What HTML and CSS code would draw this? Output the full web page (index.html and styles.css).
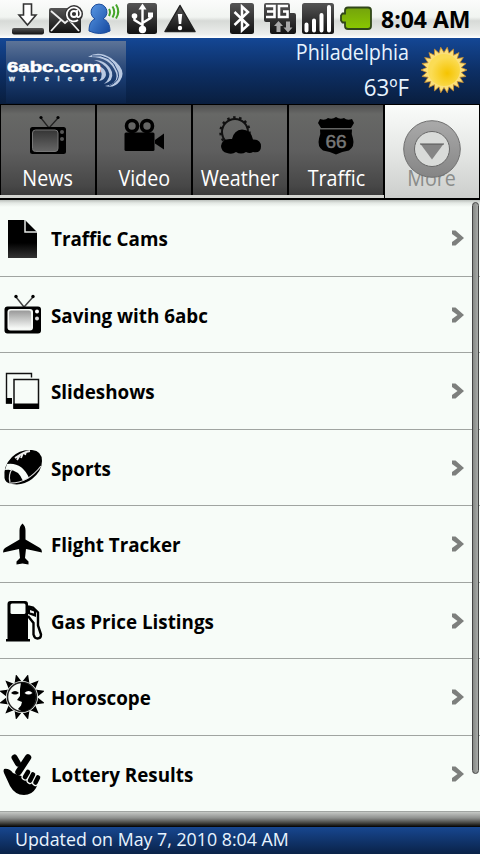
FILE: index.html
```html
<!DOCTYPE html>
<html lang="en">
<head>
  <meta charset="UTF-8">
  <title>6abc.com wireless</title>
  <link rel="stylesheet" href="styles.css">
</head>
<body>

<!-- shared shapes -->
<svg class="defs" width="0" height="0">
  <defs>
    <linearGradient id="dark" x1="0" y1="0" x2="0" y2="1">
      <stop offset="0" stop-color="#555"/><stop offset="1" stop-color="#111"/>
    </linearGradient>
    <linearGradient id="screen" x1="0" y1="0" x2="0" y2="1">
      <stop offset="0" stop-color="#999"/><stop offset="1" stop-color="#f8faf8"/>
    </linearGradient>
    <linearGradient id="screenDark" x1="0" y1="0" x2="0" y2="1">
      <stop offset="0" stop-color="#353535"/><stop offset="1" stop-color="#666"/>
    </linearGradient>
    <linearGradient id="paper" x1="0" y1="0" x2="0" y2="1">
      <stop offset="0.6" stop-color="#000"/><stop offset="1" stop-color="#333"/>
    </linearGradient>
    <linearGradient id="blue" x1="0" y1="0" x2="1" y2="1">
      <stop offset="0" stop-color="#5b9be8"/><stop offset="1" stop-color="#14489e"/>
    </linearGradient>
    <linearGradient id="green" x1="0" y1="0" x2="0" y2="1">
      <stop offset="0" stop-color="#74a30c"/><stop offset="1" stop-color="#8ac800"/>
    </linearGradient>
    <linearGradient id="ring" x1="0" y1="0" x2="0" y2="1">
      <stop offset="0" stop-color="#aaa"/><stop offset="1" stop-color="#858585"/>
    </linearGradient>
    <radialGradient id="sun" cx=".6" cy=".6">
      <stop offset="0" stop-color="#f5c400"/><stop offset="1" stop-color="#fbdc55"/>
    </radialGradient>
    <symbol id="arrow" viewBox="0 0 14 18">
      <path d="M1 1.500H4.500L13 9L4.500 16.500H1V13L6.500 9L1 5Z" fill="#7d7f7d"/>
    </symbol>
  </defs>
</svg>

<div class="status">
  <svg width="374" height="38" viewBox="0 0 374 38">
    <!-- download -->
    <rect x="12" y="28" width="32" height="6.500" rx="2" fill="url(#dark)"/>
    <path d="M23.500 4h8v11h4.500L27.500 25 19 15h4.500z" fill="#fff" stroke="#333" stroke-width="1.600"/>
    <!-- mail -->
    <rect x="49" y="8" width="32" height="25" rx="2" fill="url(#dark)"/>
    <path d="M51 11l14 12L79 11M51 31l10-11M79 31L69 20" fill="none" stroke="#eee" stroke-width="1.800"/>
    <circle cx="74" cy="14" r="9" fill="#333"/>
    <circle cx="74" cy="14" r="3" fill="none" stroke="#fff" stroke-width="1.800"/>
    <path d="M77 10v5q0 2.500 2 2 2-1 1.500-4.500A7 7 0 1 0 78 20" fill="none" stroke="#fff" stroke-width="1.800"/>
    <!-- voice contact -->
    <path d="M89 31c0-8 3-11 6-12a8 8 0 1 1 8 0c4 1 7 5 7 12q-10 5-21 0z" fill="url(#blue)" stroke="#1b4c9c"/>
    <path d="M109 9q2 3 0 7M112.500 6.500q3.500 5.500 0 11M116 4.500q4.500 7 0 14" fill="none" stroke="#45a52a" stroke-width="2"/>
    <!-- usb -->
    <rect x="127" y="3" width="30" height="31" rx="2.500" fill="url(#dark)"/>
    <path d="M142.500 8v22M142.500 25l-8-5v-4M142.500 23l8-5v-3" fill="none" stroke="#fff" stroke-width="2.400"/>
    <path d="M142.500 3.500l4 6h-8z" fill="#fff"/>
    <circle cx="142.500" cy="29.500" r="3.700" fill="#fff"/>
    <circle cx="134.500" cy="16" r="2.800" fill="#fff"/>
    <rect x="148" y="12.500" width="5" height="5" fill="#fff"/>
    <!-- warning -->
    <path d="M180 5.500L195 31.500H165z" fill="url(#dark)" stroke="#222" stroke-width="1.500" stroke-linejoin="round"/>
    <path d="M177.800 14h4.400l-1 10h-2.400z" fill="#fff"/><circle cx="180" cy="28" r="2.200" fill="#fff"/>
    <!-- bluetooth -->
    <rect x="230" y="3" width="24" height="31" rx="2.500" fill="url(#dark)"/>
    <path d="M234.500 12l13.500 13-6 5.500V6.500L248 12 234.500 25" fill="none" stroke="#fff" stroke-width="2.500"/>
    <!-- 3g -->
    <path d="M266 3h22q2 0 2 2v8h4q2 0 2 2v17q0 2-2 2h-22q-2 0-2-2V22h-4q-2 0-2-2V5q0-2 2-2z" fill="url(#dark)"/>
    <path d="M266 6h8.500v11H266M267 11.500h7M288 6h-9v11h8.500v-5.500H283" fill="none" stroke="#fff" stroke-width="2.600"/>
    <path d="M278.500 21l4.500 5h-2.500v6h-4v-6H274zM288 32.500l-4.500-5h2.500v-6h4v6h2.500z" fill="#aaa"/>
    <!-- signal -->
    <rect x="302" y="3" width="32" height="31" rx="2.500" fill="url(#dark)"/>
    <path d="M306.500 24.500v6M314 20.500v10M321.500 15v15.500M329 7v23.500" stroke="#fff" stroke-width="4" stroke-linecap="round"/>
    <!-- battery -->
    <path d="M348 7.500h20q3 0 3 3v15.500q0 3-3 3H348q-3 0-3-3v-3.500h-2.500l-1.500-2v-5l1.500-2h2.500V10.500q0-3 3-3z" fill="url(#green)" stroke="#30461a" stroke-width="1.800"/>
  </svg>
  <span class="clock">8:04 AM</span>
</div>

<header class="top">
  <div class="logo">
    <svg width="120" height="62" viewBox="0 0 120 62">
      <g fill="#b9c9e2">
        <path d="M82 16Q92 9 105 17 122 29 114 40 108 48 99 45 113 43 110 32 104 15 82 16z"/>
        <path d="M88 19Q101 19 106 31 108 40 98 43 106 36 102 29 98 22 88 19z"/>
        <path d="M92 25Q100 27 100 34 99 39 93 40 99 34 92 25z"/>
      </g>
      <path d="M86 15Q105 12 112 31 115 40 103 45" fill="none" stroke="#27477b"/>
      <text class="logo-name" x="1" y="31" textLength="94" lengthAdjust="spacingAndGlyphs">6abc.com</text>
      <text class="logo-sub" x="3" y="39.500" textLength="88">wireless</text>
    </svg>
  </div>
  <div class="weather">
    <p class="city">Philadelphia</p>
    <p class="temp">63ºF</p>
  </div>
  <svg class="sun" width="48" height="48" viewBox="-24 -24 48 48">
    <path id="rays" fill="#fbe07a" stroke="#c98c2c" stroke-width=".8"/>
    <circle r="16" fill="url(#sun)"/>
  </svg>
</header>

<nav class="tabs">
  <a class="tab">
    <svg width="44" height="44" viewBox="0 0 44 44">
      <path d="M15 4l8 10 9-10" fill="none" stroke="#222" stroke-width="1.300"/>
      <circle cx="15" cy="3.500" r="1.600"/><circle cx="32" cy="3.500" r="1.600"/>
      <rect x="4" y="13" width="36" height="27" rx="2.500"/>
      <rect x="6.500" y="16" width="25.500" height="21.500" rx="3" fill="url(#screenDark)" stroke="#777"/>
      <circle cx="36" cy="18" r="2" fill="#555"/><circle cx="36" cy="25" r="2" fill="#555"/>
    </svg>
    <span>News</span>
  </a>
  <a class="tab">
    <svg width="44" height="44" viewBox="0 0 44 44">
      <circle cx="10" cy="12" r="5.500" fill="none" stroke="#000" stroke-width="3.600"/>
      <circle cx="25" cy="12" r="5.500" fill="none" stroke="#000" stroke-width="3.600"/>
      <rect x="2.500" y="18.500" width="30" height="18.500" rx="1.500"/>
      <path d="M33 26l9-6.500v16l-9-6z"/>
    </svg>
    <span>Video</span>
  </a>
  <a class="tab">
    <svg width="44" height="44" viewBox="0 0 44 44">
      <circle cx="17" cy="18" r="13" fill="none" stroke="#111" stroke-width="2"/>
      <circle cx="17" cy="18" r="14.500" fill="none" stroke="#111" stroke-width="2.500" stroke-dasharray="2.500 3.500"/>
      <path d="M9 39a7 7 0 0 1-6-7q1-8 11-7 2-9 10-9.500 9 0 11 10 8 0 8 7t-8 5.500q-3 2-7 0-5 3-10 0-4 3-9 1z"/>
    </svg>
    <span>Weather</span>
  </a>
  <a class="tab">
    <svg width="44" height="44" viewBox="0 0 44 44">
      <path d="M6 5q5 2 8-1 4 2 8-1 4 3 8 1 3 3 8 1l2 4-3 5H7l-3-5z"/>
      <path d="M6 15.500h32q-1 4 1 9 2 8-4 12-7 1-13 4-6-3-13-4-6-4-4-12 2-5 1-9z"/>
      <text class="route" x="22" y="34" text-anchor="middle">66</text>
    </svg>
    <span>Traffic</span>
  </a>
  <a class="tab active">
    <span>More</span>
    <svg class="more" width="60" height="60" viewBox="0 0 60 60">
      <circle cx="30" cy="30" r="28.300" fill="url(#ring)" stroke="#707070"/>
      <circle cx="30" cy="30" r="17.500" fill="#d9dbd9" stroke="#686868"/>
      <path d="M18.500 25h23L30 40.500z" fill="#858585"/>
      <path d="M18 25h24" stroke="#555"/>
    </svg>
  </a>
</nav>

<main class="list">
  <div class="row">
    <svg class="icon" viewBox="0 0 44 44">
      <path d="M8 4h17l12 12v26H8z" fill="url(#paper)"/>
      <path d="M25 4v12h12" fill="none" stroke="#e5e8e5" stroke-width="1.500"/>
    </svg>
    <span>Traffic Cams</span>
    <svg class="arrow"><use href="#arrow"/></svg>
  </div>
  <div class="row">
    <svg class="icon" viewBox="0 0 44 44">
      <path d="M16 4l8 10 9-10" fill="none" stroke="#444" stroke-width="1.500"/>
      <circle cx="16" cy="3.500" r="1.700"/><circle cx="33" cy="3.500" r="1.700"/>
      <rect x="4.500" y="13.500" width="36.500" height="27" rx="3"/>
      <rect x="7.500" y="16" width="25.500" height="21.500" rx="3" fill="#f5f8f5"/>
      <rect x="9" y="17.500" width="22" height="18" rx="2" fill="url(#screen)"/>
      <circle cx="37" cy="18.500" r="2" fill="#fff"/><circle cx="37" cy="25.500" r="2" fill="#ddd"/>
    </svg>
    <span>Saving with 6abc</span>
    <svg class="arrow"><use href="#arrow"/></svg>
  </div>
  <div class="row">
    <svg class="icon" viewBox="0 0 44 44">
      <path d="M31.500 8.500v-4H6.500V34H12" fill="none" stroke="#111" stroke-width="1.400"/>
      <rect x="6" y="29" width="6" height="5.500"/>
      <rect x="14" y="10.500" width="24.500" height="28.500" fill="#f7fcf8" stroke="#111" stroke-width="1.500"/>
      <rect x="13.500" y="34.500" width="25.500" height="5.500"/>
    </svg>
    <span>Slideshows</span>
    <svg class="arrow"><use href="#arrow"/></svg>
  </div>
  <div class="row">
    <svg class="icon" viewBox="0 0 44 44">
      <path d="M4.500 32Q3 20 12 11 20 3 32 4q10 1 10 11 0 10-10 18Q23 40 12 38 5 37 4.500 32z"/>
      <path d="M7 18q15-2 22 14l-6 3Q18 22 5 24z" fill="#f7fcf8"/>
      <path d="M9 37q18 1 32-17M12 23q-4 6-2 13" fill="none" stroke="#ddd" stroke-width="1.200"/>
      <path d="M15 12q9-6 15-7M17 14l3-5M21 12l2-5M25 9l1-3" fill="none" stroke="#eee" stroke-width="1.800"/>
    </svg>
    <span>Sports</span>
    <svg class="arrow"><use href="#arrow"/></svg>
  </div>
  <div class="row">
    <svg class="icon" viewBox="0 0 44 44">
      <path d="M22.500 1.500q3 2.500 3 7v9L40 26q2 1 2 4.500L26 27l-1 9 3.500 3.500v3l-6-1-6 1v-3L20 36l-1-9-16 3.500Q3 27 5 26l14.500-8.500v-9q0-4.500 3-7z"/>
    </svg>
    <span>Flight Tracker</span>
    <svg class="arrow"><use href="#arrow"/></svg>
  </div>
  <div class="row">
    <svg class="icon" viewBox="0 0 44 44">
      <path d="M7.500 5q0-3 3-3H25q3 0 3 3v35h2v2.500H6V40h1.500z"/>
      <rect x="10.500" y="4.500" width="15" height="10.500" rx="1.500" fill="#f7fcf8"/>
      <path d="M28 7.500l5 1 5 5v13l3 9q0 4-3.500 4-3 0-4-4V24L28 17" fill="none" stroke="#000" stroke-width="2.400"/>
      <path d="M28 7l8 4v7l-8-3z"/><path d="M30 11l4 1.500v2l-4-1z" fill="#eee"/>
    </svg>
    <span>Gas Price Listings</span>
    <svg class="arrow"><use href="#arrow"/></svg>
  </div>
  <div class="row">
    <svg class="icon" viewBox="0 0 44 44">
      <g transform="translate(22 22)">
        <path id="spikes"/>
        <circle r="16" fill="#f7fcf8"/>
        <circle r="14.500" fill="#f7fcf8" stroke="#222" stroke-width="1.500"/>
        <path d="M-1-14.500A14.500 14.500 0 0 1 0 14.500L-4 12-1 8.500 0 5-5 3-2-1-2-8z"/>
        <path d="M-11-4q4-4 8 0-4 3-8 0z"/>
        <path d="M2.500-4q4-4 8 0-4 3-8 0z" fill="#fff"/>
      </g>
    </svg>
    <span>Horoscope</span>
    <svg class="arrow"><use href="#arrow"/></svg>
  </div>
  <div class="row">
    <svg class="icon" viewBox="0 0 44 44">
      <path d="M14.500 5.500l3.500 6" stroke="#000" stroke-width="6" stroke-linecap="round"/>
      <path d="M28 5.500L18.500 20" stroke="#000" stroke-width="6.500" stroke-linecap="round"/>
      <path d="M4 17q5-1 9 4l5 2 10 3 9 1q2 3-1 9-4 7-12 7-9 0-14-9L4 21q-1-2 0-4z"/>
      <g fill="none" stroke-linecap="round">
        <path d="M28 20l-3 5M33 22.500l-3 6M38 25.500l-2.500 5" stroke="#f7fcf8" stroke-width="7"/>
        <path d="M28 20l-3 5M33 22.500l-3 6M38 25.500l-2.500 5" stroke="#000" stroke-width="4.600"/>
      </g>
    </svg>
    <span>Lottery Results</span>
    <svg class="arrow"><use href="#arrow"/></svg>
  </div>
  <div class="scrollbar"></div>
</main>

<div class="divider"></div>
<footer>Updated on May 7, 2010 8:04 AM</footer>

<script>
  // Star outline with n points, alternating outer and inner radius
  function star(n, outer, inner) {
    let d = '';
    for (let i = 0; i < n * 2; i++) {
      const r = i % 2 ? inner : outer;
      const a = Math.PI * (i + 1) / n - Math.PI / 2;
      d += (i ? 'L' : 'M') + (r * Math.cos(a)).toFixed(2) + ' ' + (r * Math.sin(a)).toFixed(2);
    }
    return d + 'Z';
  }
  document.getElementById('rays').setAttribute('d', star(22, 23, 17.5));
  document.getElementById('spikes').setAttribute('d', star(12, 23.5, 15));
</script>

</body>
</html>
```

FILE: styles.css
```css
* {
  box-sizing: border-box;
}
body {
  font-family: "Open Sans", "Noto Sans", sans-serif;
  background: #f7fcf8;
  margin: 0;
  width: 480px;
  height: 854px;
  overflow: hidden;
  display: flex;
  flex-direction: column;
  color: #000;
}
svg {
  display: block;
  flex: none;
}
.defs {
  position: absolute;
}

/* Status bar */
.status {
  height: 38px;
  flex: none;
  display: flex;
  align-items: center;
  background: linear-gradient(#fbfcfb, #f1f4f1 45%, #d7dad7 55%, #eceeec 90%, #fff);
}
.clock {
  margin-left: 7px;
  font-size: 23px;
  font-weight: 700;
  white-space: nowrap;
}

/* Header */
.top {
  height: 66px;
  flex: none;
  display: flex;
  padding: 3px 12px 0 6px;
  background: linear-gradient(#144795, #0d2f65 50%, #091e3e);
}
.logo {
  width: 120px;
  height: 62px;
  background: linear-gradient(#5d7498, #34517f 35%, #193b70 60%, #0b2349);
}
.logo-name {
  font: bold 15px "Liberation Sans", sans-serif;
  fill: #fff;
  stroke: #fff;
  stroke-width: 0.5px;
}
.logo-sub {
  font: bold 7.5px "Liberation Sans", sans-serif;
  fill: #dbe4f0;
  stroke: #dbe4f0;
  stroke-width: 0.4px;
}
.weather {
  flex: 1;
  text-align: right;
  color: #e8f4ff;
  font-size: 21px;
  line-height: 35px;
  margin: -6px 11px 0 0;
}
.weather p {
  margin: 0;
  transform: scaleX(0.94);
  transform-origin: right;
}
.weather .temp {
  font-size: 23px;
  transform: scaleX(0.97);
}
.sun {
  margin: 5px 0 0 0;
}

/* Tabs */
.tabs {
  height: 96px;
  flex: none;
  display: flex;
  padding-top: 1px;
  background: linear-gradient(#000 1px, #000 91px, #d5d6d2 91px, #d0d1cd 94px, #000 94px);
}
.tab {
  width: 96px;
  height: 90px;
  display: flex;
  flex-direction: column;
  align-items: center;
  border-left: 1px solid #000;
  border-right: 1px solid #000;
  background: linear-gradient(#505050, #676866 10%, #5f5f5f 50%, #474747 90%, #3b3b3b);
  color: #fff;
  font-size: 21.5px;
  line-height: 30px;
}
.tab svg {
  margin: 9px 0 5px;
}
.tab span {
  transform: scaleX(0.915);
}
.route {
  font: 19px "Liberation Sans", sans-serif;
  fill: #777;
  stroke: #777;
  stroke-width: 0.5px;
}
.active {
  position: relative;
  height: 93px;
  justify-content: flex-end;
  padding-bottom: 5px;
  background: linear-gradient(#fafcfa, #e5e7e5 50%, #cccecc);
  color: #8a8c8a;
}
.tab .more {
  position: absolute;
  left: 17px;
  top: 14px;
  margin: 0;
}

/* Menu list */
.list {
  position: relative;
  height: 612px;
  flex: none;
  background: linear-gradient(#bbc0bc, #e3e8e4 3px, #f7fcf8 7px);
}
.row {
  height: 76.5px;
  padding-top: 1px;
  display: flex;
  align-items: center;
  border-bottom: 1.500px solid #a0a4a1;
  font-size: 20px;
  font-weight: 700;
}
.row span {
  margin: 1px 0 0 7px;
  flex: 1;
  transform: scaleX(0.94);
  transform-origin: left;
}
.icon {
  width: 44px;
  height: 44px;
}
.arrow {
  width: 14px;
  height: 18px;
  margin-right: 15px;
}
.scrollbar {
  position: absolute;
  right: 1px;
  top: 2px;
  width: 7px;
  height: 572px;
  border: 1px solid #444;
  border-radius: 4px;
  background: linear-gradient(90deg, #868986, #a8aba8);
}

/* Bottom */
.divider {
  height: 15px;
  flex: none;
  background: linear-gradient(#c5c8c5, #8e908e 40%, #40403c 75%, #000);
}
footer {
  height: 27px;
  flex: none;
  padding-left: 15px;
  background: linear-gradient(#174790, #0a2248);
  color: #e8f4ff;
  font-size: 17.8px;
  line-height: 25px;
}
```
